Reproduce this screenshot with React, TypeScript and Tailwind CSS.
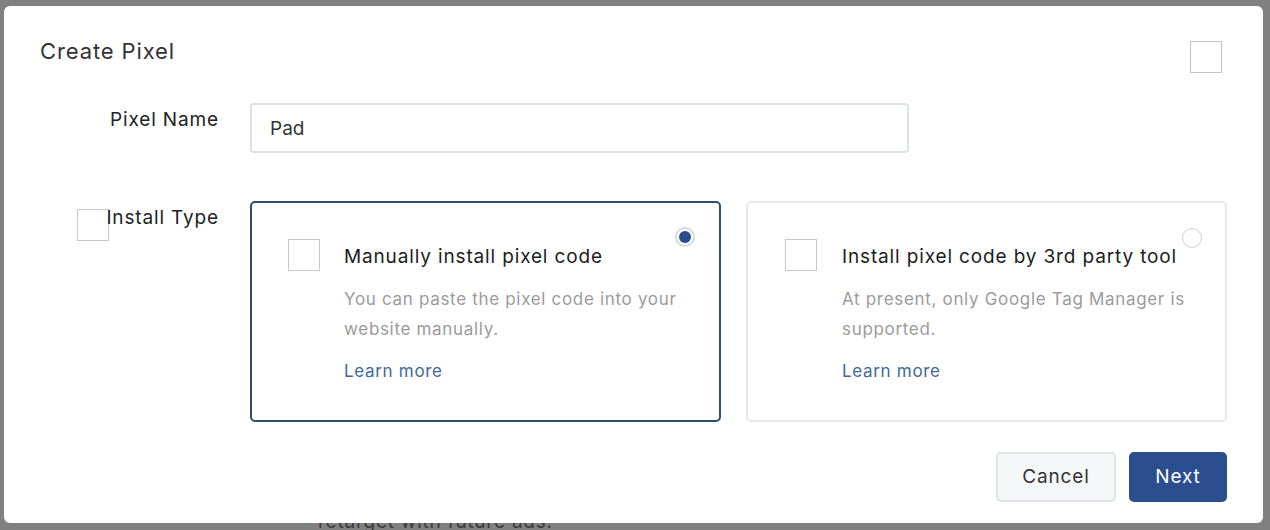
import React from "react";

type Option = {
    title: string;
    desc: string;
    selected: boolean;
};

const options: Option[] = [
    {
        title: "Manually install pixel code",
        desc: "You can paste the pixel code into your website manually.",
        selected: true,
    },
    {
        title: "Install pixel code by 3rd party tool",
        desc: "At present, only Google Tag Manager is supported.",
        selected: false,
    },
];

function OptionCard({ opt, wide }: { opt: Option; wide?: boolean }) {
    return (
        <div
            className={`relative flex h-[221px] rounded-[5px] border-2 pt-[36px] ${
                wide ? "w-[481px] pl-[37px]" : "w-[471px] pl-[36px]"
            } ${opt.selected ? "border-[#2f4d70]" : "border-[#e6e8ea]"}`}
        >
            <div className="h-8 w-8 shrink-0 border border-[#c9c9c9]" />
            <div className={`flex-1 pt-[4px] pr-[20px] ${wide ? "ml-[25px]" : "ml-[24px]"}`}>
                <p className="whitespace-nowrap text-[19px] leading-[28px] tracking-[0.045em] text-[#1c1c1c]">{opt.title}</p>
                <p className="mt-[13px] text-[17px] leading-[30px] tracking-[0.04em] text-[#9b9b9b]">{opt.desc}</p>
                <p className="mt-[12px] text-[17px] leading-[30px] tracking-[0.04em] text-[#41699c]">Learn more</p>
            </div>
            {opt.selected ? (
                <span className="absolute right-[24px] top-[24px] flex h-5 w-5 items-center justify-center rounded-full border-2 border-[#d6dbe2] bg-white">
                    <span className="h-3 w-3 rounded-full bg-[#2a4b8d]" />
                </span>
            ) : (
                <span className="absolute right-[23px] top-[25px] h-5 w-5 rounded-full border border-[#cfcfcf] bg-white" />
            )}
        </div>
    );
}

export default function App() {
    return (
        <div className="relative h-[530px] w-[1270px] overflow-hidden bg-[#808080] font-['Inter','Noto_Sans',sans-serif]">
            {/* page behind the dialog */}
            <p className="absolute left-[318px] top-[508px] text-[19px] leading-[28px] tracking-[0.04em] text-[#3a3a3a]">
                retarget with future ads.
            </p>

            <div className="relative ml-[4px] mt-[6px] h-[517px] w-[1259px] rounded-[6px] bg-white px-[36px] pt-[30px]">
                <header className="flex items-start justify-between">
                    <h2 className="text-[22px] leading-[30px] tracking-[0.04em] text-[#333]">Create Pixel</h2>
                    <button className="mr-[5px] mt-[5px] h-8 w-8 border border-[#c4c4c4]" aria-label="Close" />
                </header>

                <div className="mt-[30px] grid grid-cols-[179px_1fr] gap-x-[31px]">
                    <label className="pt-[3px] text-right text-[19px] leading-[28px] tracking-[0.045em] text-[#222]">
                        Pixel Name
                    </label>
                    <input
                        defaultValue="Pad"
                        className="h-[50px] w-[659px] rounded-[4px] border-2 border-[#dde1e4] px-[18px] text-[19px] text-[#333] outline-none"
                    />
                </div>

                <div className="mt-[48px] grid grid-cols-[179px_1fr] gap-x-[31px]">
                    <div className="relative pt-[3px] text-right text-[19px] leading-[28px] tracking-[0.045em] text-[#222]">
                        <span className="absolute left-[37px] top-[8px] h-8 w-8 border border-[#c9c9c9]" />
                        <span className="relative">Install Type</span>
                    </div>
                    <div className="flex gap-[25px]">
                        <OptionCard opt={options[0]} />
                        <OptionCard opt={options[1]} wide />
                    </div>
                </div>

                <div className="mt-[30px] flex justify-end gap-[13px]">
                    <button className="h-[50px] w-[120px] rounded-[5px] border-2 border-[#dfe2e6] bg-[#f5f7f9] text-[19px] tracking-[0.045em] text-[#333]">
                        Cancel
                    </button>
                    <button className="h-[50px] w-[98px] rounded-[5px] bg-[#2b4f8e] text-[19px] tracking-[0.045em] text-white">
                        Next
                    </button>
                </div>
            </div>
        </div>
    );
}
